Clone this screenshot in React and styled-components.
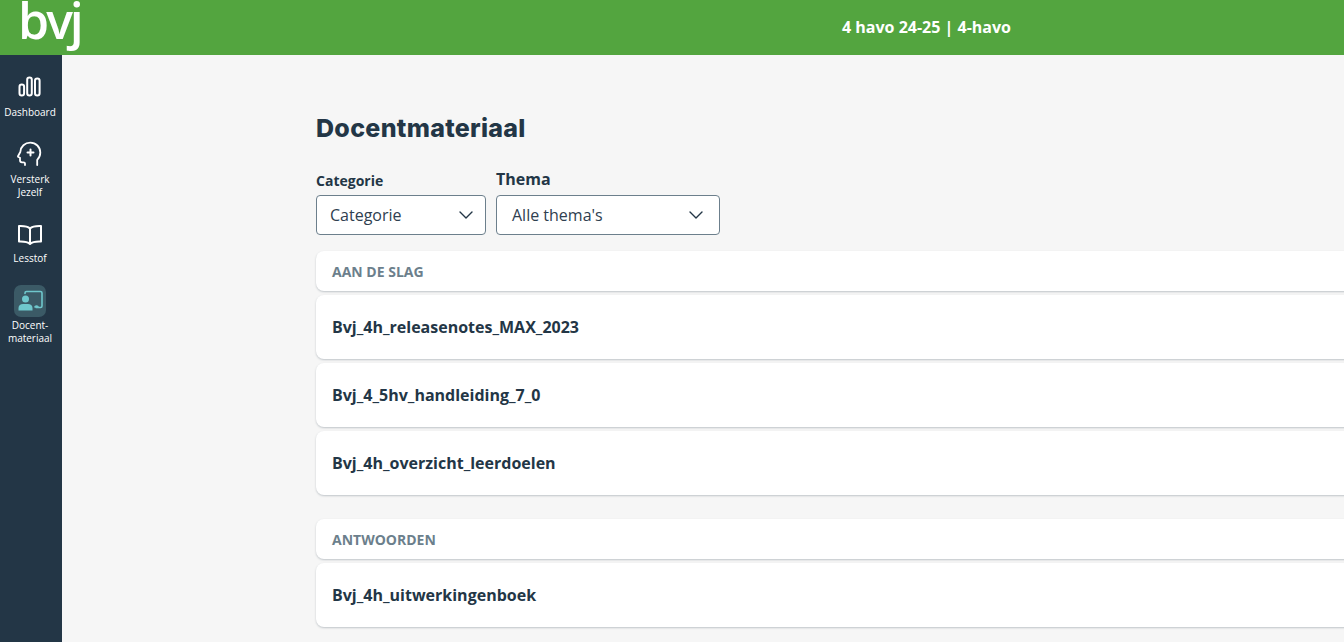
import React from 'react';
import styled, { createGlobalStyle } from 'styled-components';

const GlobalStyle = createGlobalStyle`
  html, body {
    margin: 0;
    padding: 0;
    height: 100%;
    overflow: hidden;
    background: #f6f6f6;
    font-family: "Open Sans", "Liberation Sans", sans-serif;
    color: #233646;
  }
  * { box-sizing: border-box; }
`;

const Page = styled.div`
  display: flex;
  flex-direction: column;
  width: 1344px;
  height: 642px;
  overflow: hidden;
`;

const TopBar = styled.header`
  display: flex;
  align-items: center;
  flex: 0 0 55px;
  height: 55px;
  background: #53a53f;
  color: #fff;
`;

const Logo = styled.div`
  flex: 0 0 842px;
  height: 55px;
  padding-left: 18px;
  font-size: 50px;
  font-weight: 600;
  line-height: 40px;
  letter-spacing: -3px;
`;

const ClassName = styled.div`
  font-size: 16px;
  font-weight: 700;
  white-space: nowrap;
  margin-top: -1px;
`;

const Body = styled.div`
  display: flex;
  flex: 1;
  min-height: 0;
`;

const Sidebar = styled.nav`
  display: flex;
  flex-direction: column;
  align-items: center;
  flex: 0 0 62px;
  width: 62px;
  padding: 16px 2px 0 0;
  background: #233646;
`;

const NavItem = styled.a`
  display: flex;
  flex-direction: column;
  align-items: center;
  width: 100%;
  height: ${(p) => p.$h}px;
  color: #fff;
  font-size: 10px;
  font-weight: 500;
  line-height: 12.5px;
  text-align: center;
  white-space: nowrap;
`;

const NavIcon = styled.span`
  display: flex;
  align-items: center;
  justify-content: center;
  width: 32px;
  height: 32px;
  margin-bottom: ${(p) => p.$gap || 0}px;
  border-radius: 7px;
  background: ${(p) => (p.$active ? '#3b5a66' : 'transparent')};
`;

const Main = styled.main`
  flex: 1;
  min-width: 0;
  padding: 58px 0 0 254px;
  overflow: hidden;
`;

const Heading = styled.h1`
  margin: 0 0 25px;
  font-family: Inter, "Open Sans", sans-serif;
  font-size: 25px;
  font-weight: 800;
  line-height: 30px;
  letter-spacing: 0.3px;
  color: #233646;
`;

const Filters = styled.div`
  display: flex;
  align-items: flex-end;
  gap: 10px;
  margin-bottom: 16px;
`;

const Filter = styled.div`
  display: flex;
  flex-direction: column;
  width: ${(p) => p.$w}px;
`;

const FilterLabel = styled.label`
  font-size: ${(p) => p.$size}px;
  font-weight: 700;
  line-height: 22px;
  margin-bottom: ${(p) => p.$mb}px;
`;

const SelectBox = styled.div`
  display: flex;
  align-items: center;
  justify-content: space-between;
  height: 40px;
  padding: 0 ${(p) => p.$pr}px 0 ${(p) => p.$pl}px;
  background: #fff;
  border: 1px solid #6c7f8c;
  border-radius: 4px;
  font-size: 16px;
  color: #2f4050;
`;

const List = styled.div`
  display: flex;
  flex-direction: column;
  gap: 4px;
  width: 1200px;
  margin-bottom: 24px;
`;

const SectionHeader = styled.div`
  display: flex;
  align-items: center;
  height: 40px;
  padding: 0 16px;
  background: #fff;
  border-radius: 8px;
  box-shadow: 0 1px 2px rgba(35, 54, 70, 0.25);
  font-size: 14px;
  font-weight: 700;
  color: #6c7f8c;
`;

const Row = styled.div`
  display: flex;
  align-items: center;
  height: 64px;
  padding: 0 16px;
  background: #fff;
  border-radius: 8px;
  box-shadow: 0 1px 2px rgba(35, 54, 70, 0.25);
  font-size: 16px;
  font-weight: 700;
  color: #233646;
`;

const Chevron = () => (
  <svg width="16" height="16" viewBox="0 0 16 16" fill="none" stroke="#233646" strokeWidth="1.4" strokeLinecap="round" strokeLinejoin="round">
    <path d="M2 5l6 6 6-6" />
  </svg>
);

const DashboardIcon = () => (
  <svg width="24" height="24" viewBox="0 0 24 24" fill="none" stroke="#fff" strokeWidth="2">
    <rect x="1.5" y="9.5" width="4.6" height="11" rx="2.3" />
    <rect x="9.2" y="2.5" width="4.6" height="18" rx="2.3" />
    <rect x="17" y="3.5" width="4.6" height="17" rx="2.3" />
  </svg>
);

const HeadIcon = () => (
  <svg width="26" height="26" viewBox="0 0 26 26" fill="none" stroke="#fff" strokeWidth="1.8" strokeLinecap="round" strokeLinejoin="round">
    <path d="M8 24v-1.500c0-.8-.6-1.200-1.500-1.200H5c-1.200 0-2-.9-2-2v-2.600l-1.600-.7c-.4-.2-.5-.6-.3-1L3.300 11C3.600 5.500 8 1.600 13.300 1.600c5.600 0 10 4.400 10 10 0 3-1.200 5.400-3.100 7.200V24" />
    <path d="M13.500 8.500v6M10.500 11.500h6" strokeWidth="2" />
  </svg>
);

const BookIcon = () => (
  <svg width="26" height="22" viewBox="0 0 26 22" fill="none" stroke="#fff" strokeWidth="2" strokeLinejoin="round">
    <path d="M13 4.500C11 2.500 7 1.800 2 2v15.500c5-.2 9 .5 11 2.500 2-2 6-2.700 11-2.500V2c-5-.2-9 .5-11 2.500z" />
    <path d="M13 4.500V20" />
  </svg>
);

const TeacherIcon = () => (
  <svg width="26" height="22" viewBox="0 0 26 22" fill="none">
    <path d="M8 3.500V3c0-1 .7-1.500 1.500-1.500h14c.8 0 1.500.6 1.500 1.500v13c0 .8-.7 1.500-1.500 1.500H19" stroke="#6fc7cc" strokeWidth="1.600" strokeLinecap="round" />
    <circle cx="8.500" cy="9" r="3.500" fill="#6fc7cc" />
    <path d="M1.500 20.500v-2.500c0-2.500 2-4 4.500-4h5c2.500 0 4.500 1.500 4.500 4v2.500z" fill="#6fc7cc" />
    <path d="M17 17.500c.3-1.500 1.200-2.300 2.500-2.300s2.200.8 2.500 2.300z" fill="#6fc7cc" />
  </svg>
);

const aanDeSlag = ['Bvj_4h_releasenotes_MAX_2023', 'Bvj_4_5hv_handleiding_7_0', 'Bvj_4h_overzicht_leerdoelen'];
const antwoorden = ['Bvj_4h_uitwerkingenboek'];

export default function App() {
  return (
    <Page>
      <GlobalStyle />
      <TopBar>
        <Logo>bvj</Logo>
        <ClassName>4 havo 24-25 | 4-havo</ClassName>
      </TopBar>
      <Body>
        <Sidebar>
          <NavItem $h={67}>
            <NavIcon $gap={3}><DashboardIcon /></NavIcon>
            Dashboard
          </NavItem>
          <NavItem $h={81}>
            <NavIcon $gap={3}><HeadIcon /></NavIcon>
            Versterk<br />Jezelf
          </NavItem>
          <NavItem $h={66}>
            <NavIcon $gap={1}><BookIcon /></NavIcon>
            Lesstof
          </NavItem>
          <NavItem $h={70}>
            <NavIcon $active $gap={2}><TeacherIcon /></NavIcon>
            Docent-<br />materiaal
          </NavItem>
        </Sidebar>
        <Main>
          <Heading>Docentmateriaal</Heading>
          <Filters>
            <Filter $w={170}>
              <FilterLabel $size={14} $mb={3}>Categorie</FilterLabel>
              <SelectBox $pl={13} $pr={11}>Categorie <Chevron /></SelectBox>
            </Filter>
            <Filter $w={224}>
              <FilterLabel $size={16} $mb={5}>Thema</FilterLabel>
              <SelectBox $pl={15} $pr={15}>Alle thema's <Chevron /></SelectBox>
            </Filter>
          </Filters>
          <List>
            <SectionHeader>AAN DE SLAG</SectionHeader>
            {aanDeSlag.map((name) => <Row key={name}>{name}</Row>)}
          </List>
          <List>
            <SectionHeader>ANTWOORDEN</SectionHeader>
            {antwoorden.map((name) => <Row key={name}>{name}</Row>)}
          </List>
        </Main>
      </Body>
    </Page>
  );
}
